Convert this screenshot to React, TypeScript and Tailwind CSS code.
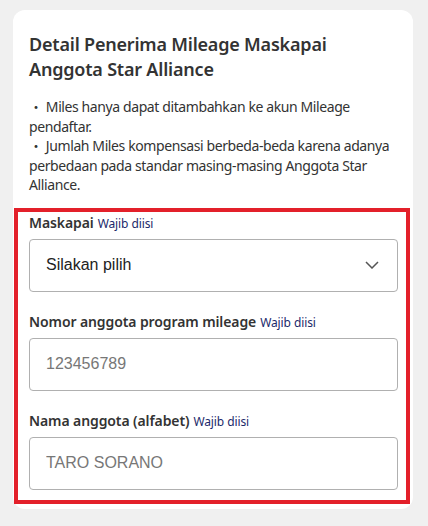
const font = { fontFamily: '"Noto Sans", "Noto Sans CJK JP", sans-serif' };
const arial = { fontFamily: '"Liberation Sans", Arial, sans-serif' };

const Required = () => (
  <span className="ml-1 text-[12px] font-normal tracking-[-0.1px] text-[#1c2a6b]">Wajib diisi</span>
);

const Field = ({ label, children }: { label: string; children: React.ReactNode }) => (
  <div className="flex flex-col">
    <label className="flex h-[20px] items-baseline text-[14px] font-semibold leading-[20px] tracking-[-0.1px] text-[#333]">
      {label}
      <Required />
    </label>
    <div className="mt-[6px]">{children}</div>
  </div>
);

const App = () => {
  return (
    <div className="min-h-[526px] bg-[#f0f0f0] pt-[10px] pl-[13px]" style={font}>
      <div className="w-[400px] h-[499px] rounded-[12px] bg-white pt-[22px]">
        <div className="px-4">
          <h2 className="text-[18px] font-semibold leading-[25px] tracking-[-0.2px] text-[#333]">
            Detail Penerima Mileage Maskapai Anggota Star Alliance
          </h2>
          <ul className="mt-[15px] text-[14px] leading-[19.5px] tracking-[-0.4px] text-[#333]">
            <li>・ Miles hanya dapat ditambahkan ke akun Mileage pendaftar.</li>
            <li>・ Jumlah Miles kompensasi berbeda-beda karena adanya perbedaan pada standar masing-masing Anggota Star Alliance.</li>
          </ul>
        </div>

        <section className="mt-[13px] ml-[1px] mr-[3px] border-4 border-[#e3202a] pl-[11px] pr-[8px] pt-[1px] pb-[10px]">
          <div className="flex flex-col gap-[20px]">
            <Field label="Maskapai">
              <div className="flex h-[53px] items-center justify-between rounded-[4px] border border-[#b0b0b0] px-4">
                <span className="text-[16px] text-[#222]" style={arial}>
                  Silakan pilih
                </span>
                <svg width="14" height="8" viewBox="0 0 14 8" className="mr-[2px]">
                  <path d="M1 1l6 6 6-6" fill="none" stroke="#555" strokeWidth="1.5" />
                </svg>
              </div>
            </Field>
            <Field label="Nomor anggota program mileage">
              <input
                placeholder="123456789"
                className="block h-[53px] w-full rounded-[4px] border border-[#b0b0b0] px-4 text-[16px] text-[#222] placeholder:text-[#777] outline-none"
                style={arial}
              />
            </Field>
            <Field label="Nama anggota (alfabet)">
              <input
                placeholder="TARO SORANO"
                className="block h-[53px] w-full rounded-[4px] border border-[#b0b0b0] px-4 text-[16px] text-[#222] placeholder:text-[#777] outline-none"
                style={arial}
              />
            </Field>
          </div>
        </section>
      </div>
    </div>
  );
};

export default App;
